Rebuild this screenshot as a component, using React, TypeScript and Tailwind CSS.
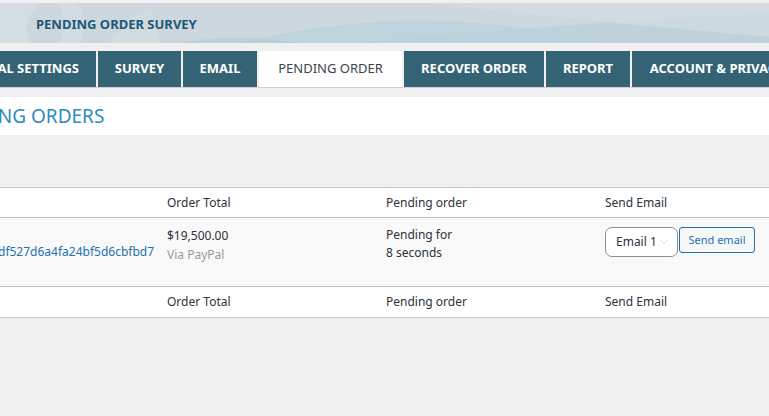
import { ChevronDown } from "lucide-react";

const tabs = [
  { label: "GENERAL SETTINGS", w: "w-[96px]", clip: true },
  { label: "SURVEY", w: "w-[83px]" },
  { label: "EMAIL", w: "w-[74px]" },
  { label: "PENDING ORDER", w: "w-[143px]", active: true },
  { label: "RECOVER ORDER", w: "w-[140px]" },
  { label: "REPORT", w: "w-[84px]" },
  { label: "ACCOUNT & PRIVACY", w: "w-[170px]" },
];

const font = { fontFamily: '"Noto Sans", "Open Sans", sans-serif' };

const Banner = () => (
  <div className="relative h-[40px] bg-[#cdd8de] overflow-hidden">
    <svg className="absolute inset-0" width="769" height="40" viewBox="0 0 769 40" preserveAspectRatio="none">
      <path d="M0 0 L40 0 Q20 20 30 40 L0 40 Z" fill="#d6dfe4" opacity="0.7" />
      <path d="M55 0 Q70 10 60 40 L80 40 Q90 15 75 0 Z" fill="#d6dfe4" opacity="0.6" />
      <path d="M110 40 Q130 10 150 5 L160 40 Z" fill="#d6dfe4" opacity="0.5" />
      <path d="M240 40 Q360 10 480 20 Q560 28 600 40 Z" fill="#bcd2db" opacity="0.8" />
      <path d="M180 40 Q230 30 300 40 Z" fill="#b4cdd7" opacity="0.7" />
      <path d="M360 40 Q500 25 769 10 L769 40 Z" fill="#b9d0da" opacity="0.7" />
      <path d="M430 0 Q600 20 769 34 L769 0 Z" fill="#d4dde2" opacity="0.6" />
    </svg>
    <div className="relative flex h-full items-center pl-[36px] pt-[3px] text-[13px] font-bold text-[#1d5877]">
      PENDING ORDER SURVEY
    </div>
  </div>
);

export default function App() {
  return (
    <div className="min-h-[416px] w-[769px] overflow-hidden bg-[#f0f0f1] pt-[3px] text-[#2c3338]" style={font}>
      <Banner />

      {/* Tabs */}
      <div className="mt-[8px] flex gap-[2px] border-b border-[#d0d0d0] whitespace-nowrap">
        {tabs.map((t) => (
          <div
            key={t.label}
            className={`flex h-[36px] shrink-0 items-center text-[13px] ${t.w} ${
              t.clip ? "justify-end pr-[17px]" : "justify-center"
            } ${t.active ? "bg-white text-[#3c434a]" : "bg-[#336375] font-bold text-white"}`}
          >
            {t.label}
          </div>
        ))}
      </div>

      {/* Heading */}
      <div className="mt-[9px] flex h-[38px] items-center bg-white">
        <h1 className="ml-[-59px] whitespace-nowrap text-[19px] text-[#2e8bbd]">PENDING ORDERS</h1>
      </div>

      {/* Table */}
      <table className="mt-[52px] w-full border-collapse text-[12px] text-[#2c3338]">
        <thead>
          <tr className="h-[30px] border-y border-[#c3c4c7] bg-white text-left">
            <th className="w-[167px] font-normal"></th>
            <th className="w-[219px] font-normal">Order Total</th>
            <th className="w-[219px] font-normal">Pending order</th>
            <th className="font-normal">Send Email</th>
          </tr>
        </thead>
        <tbody>
          <tr className="h-[69px] border-b border-[#c3c4c7] bg-[#f9f9f9] align-top">
            <td className="pt-[25px] text-[#2271b1]">
              <span className="ml-[-2px] whitespace-nowrap">df527d6a4fa24bf5d6cbfbd7</span>
            </td>
            <td className="pt-[8px] leading-[19px]">
              <div className="text-[12px]">$19,500.00</div>
              <div className="text-[12px] text-[#999]">Via PayPal</div>
            </td>
            <td className="pt-[8px] text-[12px] leading-[18px]">
              <div>Pending for</div>
              <div>8 seconds</div>
            </td>
            <td className="pt-[9px]">
              <div className="flex items-start">
                <div className="flex h-[30px] w-[73px] items-center rounded-[7px] border border-[#8c8f94] bg-white pl-[10px] text-[#2c3338]">
                  <span>Email 1</span>
                  <ChevronDown size={12} strokeWidth={1.5} className="ml-[1px] text-[#c3c4c7]" />
                </div>
                <button className="ml-[1px] h-[26px] w-[76px] rounded-[3px] border border-[#2271b1] bg-[#f6f7f7] text-[11px] text-[#2271b1]">
                  Send email
                </button>
              </div>
            </td>
          </tr>
        </tbody>
        <tfoot>
          <tr className="h-[31px] border-b border-[#c3c4c7] bg-white text-left">
            <td></td>
            <td>Order Total</td>
            <td>Pending order</td>
            <td>Send Email</td>
          </tr>
        </tfoot>
      </table>
    </div>
  );
}
